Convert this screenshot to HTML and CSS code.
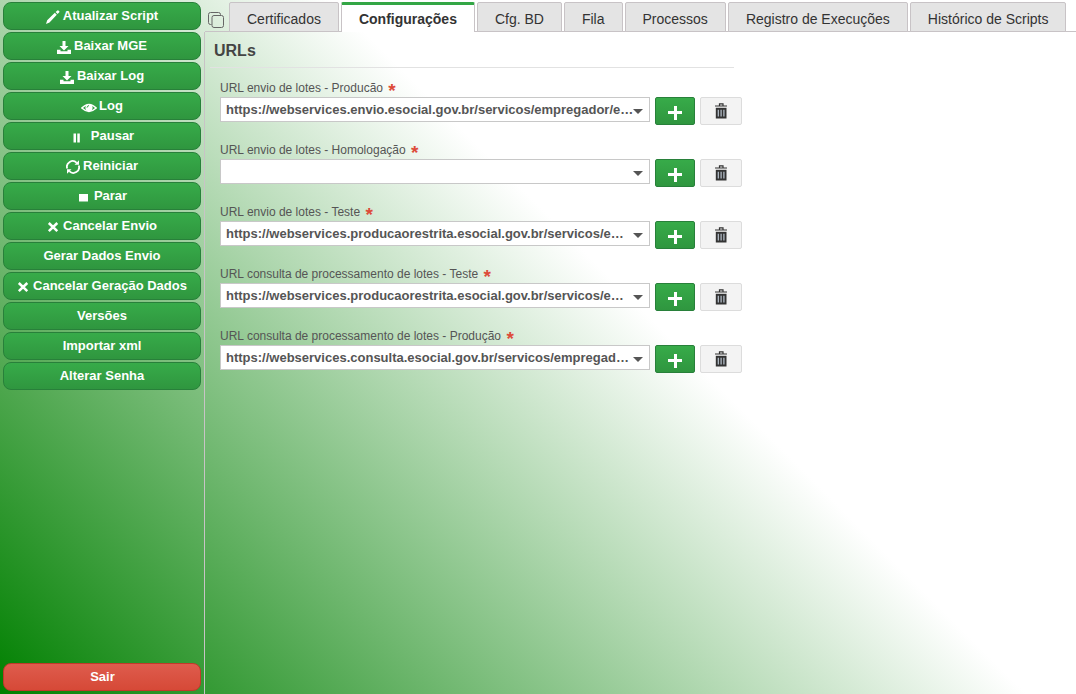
FILE: index.html
```html
<!DOCTYPE html>
<html lang="pt-BR">
<head>
  <meta charset="UTF-8" />
  <meta name="viewport" content="width=device-width, initial-scale=1.0" />
  <title>Configurações</title>
  <link rel="stylesheet" href="styles.css">
</head>
<body>
  <svg class="sprite">
    <symbol id="pencil" viewBox="0 0 14 14"><path d="M0 14l1.200-3.800 7.600-7.400 2 2L3.500 12.600zM9.600 2L11.400.4q.5-.4 1 0l.9.900q.4.500 0 1L11.600 4z"/></symbol>
    <symbol id="download" viewBox="0 0 14 14"><path d="M5.500 1h3v5H11.500L7 10.500 2.500 6h3zM0 9.800h3.500v1.500h7V9.800H14V14H0z"/></symbol>
    <symbol id="eye" viewBox="0 0 16 14"><path d="M.8 8Q8 .8 15.200 8 8 14.800.8 8z" fill="none" stroke="currentColor" stroke-width="1.500"/><circle cx="8" cy="7.700" r="3.600"/><path d="M6 7.600Q6.200 5.800 8 5.600" fill="none" stroke="#33a245" stroke-width="1"/></symbol>
    <symbol id="pause" viewBox="0 0 14 14"><path d="M3.500 3.500h2.500v9H3.500zM7.300 3.500h2.500v9H7.300z"/></symbol>
    <symbol id="refresh" viewBox="0 0 14 14"><path d="M1.200 8.500A5.700 5.700 0 0 1 10.700 2.800M12.800 5.500A5.700 5.700 0 0 1 3.300 11.200" fill="none" stroke="currentColor" stroke-width="1.800"/><path d="M13 .3V4.800H8.500zM1 13.700V9.200h4.500z"/></symbol>
    <symbol id="stop" viewBox="0 0 14 14"><path d="M2 4h9v7.500H2z"/></symbol>
    <symbol id="cross" viewBox="0 0 12 14"><path d="M1.800 3l8.500 8.200M10.300 3l-8.500 8.200" fill="none" stroke="currentColor" stroke-width="2.500"/></symbol>
    <symbol id="trash" viewBox="0 0 12 16"><path d="M4.500 2.500V.9h3.500v1.600M0 3h12" fill="none" stroke="currentColor" stroke-width="1.200"/><path d="M.8 4.800h10.700V15.500H.8z"/><path d="M3.300 6.800v6.700M6.100 6.800v6.700M8.900 6.800v6.700" stroke="#b9c4cf" stroke-width="1.200"/></symbol>
  </svg>

  <aside class="sidebar">
    <button class="btn"><svg class="icon"><use href="#pencil"/></svg>Atualizar Script</button>
    <button class="btn"><svg class="icon"><use href="#download"/></svg>Baixar MGE</button>
    <button class="btn"><svg class="icon"><use href="#download"/></svg>Baixar Log</button>
    <button class="btn"><svg class="icon icon-eye"><use href="#eye"/></svg>Log</button>
    <button class="btn"><svg class="icon icon-pause"><use href="#pause"/></svg>Pausar</button>
    <button class="btn"><svg class="icon"><use href="#refresh"/></svg>Reiniciar</button>
    <button class="btn"><svg class="icon"><use href="#stop"/></svg>Parar</button>
    <button class="btn"><svg class="icon icon-cross"><use href="#cross"/></svg>Cancelar Envio</button>
    <button class="btn">Gerar Dados Envio</button>
    <button class="btn"><svg class="icon icon-cross"><use href="#cross"/></svg>Cancelar Geração Dados</button>
    <button class="btn">Versões</button>
    <button class="btn">Importar xml</button>
    <button class="btn">Alterar Senha</button>
    <button class="btn btn-exit">Sair</button>
  </aside>

  <main class="content">
    <nav class="tabs">
      <svg class="copy" viewBox="0 0 16 16"><path d="M3.500 12.500H2.500a2 2 0 0 1-2-2V2.500a2 2 0 0 1 2-2h8a2 2 0 0 1 2 2v1"/><rect x="4" y="3.500" width="11.500" height="12" rx="2"/></svg>
      <a class="tab">Certificados</a>
      <a class="tab active">Configurações</a>
      <a class="tab">Cfg. BD</a>
      <a class="tab">Fila</a>
      <a class="tab">Processos</a>
      <a class="tab">Registro de Execuções</a>
      <a class="tab">Histórico de Scripts</a>
    </nav>

    <section class="panel">
      <h2>URLs</h2>

      <div class="field">
        <label>URL envio de lotes - Producão <span class="required">*</span></label>
        <div class="row">
          <div class="combo">https://webservices.envio.esocial.gov.br/servicos/empregador/e…</div>
          <button class="add"></button>
          <button class="remove"><svg><use href="#trash"/></svg></button>
        </div>
      </div>

      <div class="field">
        <label>URL envio de lotes - Homologação <span class="required">*</span></label>
        <div class="row">
          <div class="combo"></div>
          <button class="add"></button>
          <button class="remove"><svg><use href="#trash"/></svg></button>
        </div>
      </div>

      <div class="field">
        <label>URL envio de lotes - Teste <span class="required">*</span></label>
        <div class="row">
          <div class="combo">https://webservices.producaorestrita.esocial.gov.br/servicos/e…</div>
          <button class="add"></button>
          <button class="remove"><svg><use href="#trash"/></svg></button>
        </div>
      </div>

      <div class="field">
        <label>URL consulta de processamento de lotes - Teste <span class="required">*</span></label>
        <div class="row">
          <div class="combo">https://webservices.producaorestrita.esocial.gov.br/servicos/e…</div>
          <button class="add"></button>
          <button class="remove"><svg><use href="#trash"/></svg></button>
        </div>
      </div>

      <div class="field">
        <label>URL consulta de processamento de lotes - Produção <span class="required">*</span></label>
        <div class="row">
          <div class="combo">https://webservices.consulta.esocial.gov.br/servicos/empregad…</div>
          <button class="add"></button>
          <button class="remove"><svg><use href="#trash"/></svg></button>
        </div>
      </div>
    </section>
  </main>
</body>
</html>
```
FILE: styles.css
```css
* {
  box-sizing: border-box;
}
body {
  margin: 0;
  height: 100vh;
  display: flex;
  overflow: hidden;
  font-family: Arial, "Liberation Sans", sans-serif;
  background: linear-gradient(45deg, #008000, #fff 58%);
}
button {
  font-family: inherit;
  margin: 0;
  padding: 0;
}
.sprite {
  display: none;
}

/* Sidebar */
.sidebar {
  width: 204px;
  flex: none;
  display: flex;
  flex-direction: column;
  gap: 2px;
  padding: 2px 3px 3px;
}
.btn {
  height: 28px;
  flex: none;
  display: flex;
  justify-content: center;
  align-items: center;
  padding-bottom: 1px;
  border: 1px solid #28803a;
  border-radius: 8px;
  background: linear-gradient(#37ab49, #2f963f);
  color: #fff;
  font-size: 13px;
  font-weight: bold;
}
.btn-exit {
  margin-top: auto;
  padding-left: 1px;
  border-color: #c1392b;
  background: linear-gradient(#de5c4d, #d64937);
}
.icon {
  width: 14px;
  height: 14px;
  margin-right: 3px;
  position: relative;
  top: 1px;
  fill: currentColor;
}
.icon-eye {
  width: 16px;
  margin-right: 2px;
}
.icon-pause {
  margin-right: 7px;
}
.icon-cross {
  width: 12px;
  margin-right: 4px;
}

/* Tabs */
.content {
  flex: 1;
  display: flex;
  flex-direction: column;
}
.tabs {
  height: 32px;
  display: flex;
  align-items: flex-end;
  gap: 2px;
  padding-left: 3px;
  margin-left: 1px;
  background: linear-gradient(#c8c3c6, #c8c3c6) bottom / 100% 1px no-repeat;
}
.copy {
  width: 16px;
  height: 16px;
  margin: 0 3px 4px 0;
  fill: none;
  stroke: #666;
}
.tab {
  height: 30px;
  padding: 0 17px;
  border: 1px solid #c8c3c6;
  border-radius: 2px 2px 0 0;
  background: #e4e4e4;
  color: #333;
  font-size: 14px;
  line-height: 32px;
  white-space: nowrap;
}
.tab.active {
  border-top: 3px solid #33a645;
  border-bottom: 0;
  background: #fff;
  font-weight: bold;
  line-height: 28px;
}

/* Form */
.panel {
  flex: 1;
  padding: 0 5px;
  border-left: 1px solid #c8c3c6;
}
h2 {
  width: 524px;
  height: 36px;
  margin: 0 0 12px;
  padding-left: 4px;
  border-bottom: 1px solid #e2e2e2;
  color: #444;
  font-size: 16px;
  line-height: 37px;
}
.field {
  height: 62px;
  padding-left: 10px;
}
label {
  display: block;
  height: 17px;
  color: #555;
  font-size: 12px;
  line-height: 16px;
}
.required {
  margin-left: 2px;
  color: #dd4b39;
  font-size: 19px;
  font-weight: bold;
  line-height: 10px;
  vertical-align: -5px;
}
.row {
  display: flex;
  gap: 5px;
}
.combo {
  position: relative;
  width: 430px;
  height: 25px;
  padding-left: 5px;
  border: 1px solid #c8c8c8;
  background: #fff;
  color: #555;
  font-size: 13px;
  font-weight: bold;
  line-height: 23px;
  white-space: nowrap;
}
.combo::after {
  content: "";
  position: absolute;
  right: 6px;
  top: 11px;
  border: 5px solid transparent;
  border-top-color: #555;
  border-bottom: 0;
}
.add,
.remove {
  width: 40px;
  height: 28px;
  border: 1px solid #28803a;
  border-radius: 2px;
  background: linear-gradient(#37ab49, #2f963f);
}
.add::before {
  content: "";
  display: block;
  width: 14px;
  height: 14px;
  margin: 3px auto 0;
  background: linear-gradient(#fff, #fff) center / 14px 3px no-repeat,
              linear-gradient(#fff, #fff) center / 3px 14px no-repeat;
}
.remove {
  width: 42px;
  border-color: #dcdcdc;
  background: #f3f3f3;
  color: #333;
}
.remove svg {
  display: block;
  width: 12px;
  height: 16px;
  margin: 0 auto;
  fill: currentColor;
}
```
